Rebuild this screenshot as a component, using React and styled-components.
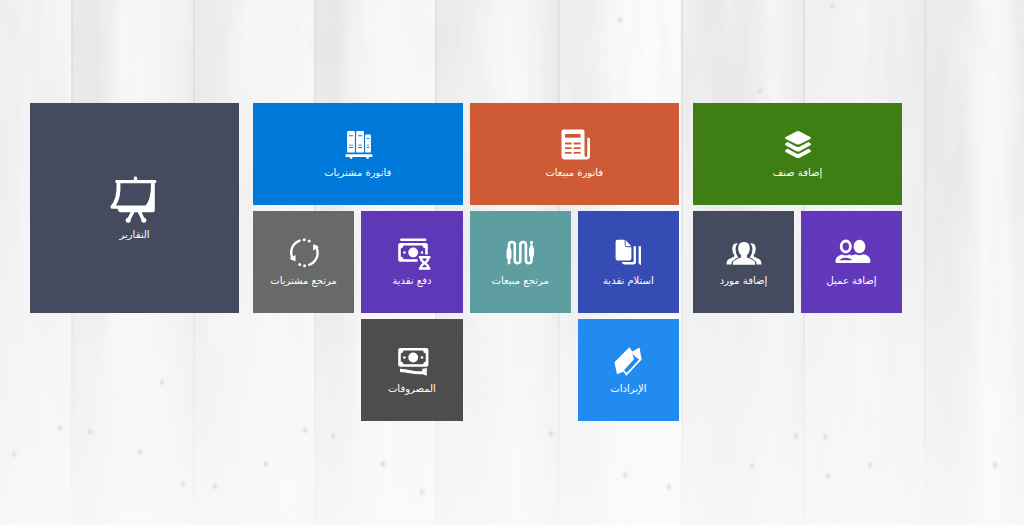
import React from "react";
import styled, { createGlobalStyle } from "styled-components";

const GlobalStyle = createGlobalStyle`
  *, *::before, *::after { box-sizing: border-box; }
  body { margin: 0; background: #f3f3f3; }
`;

const Page = styled.main`
  position: relative;
  z-index: 0;
  min-height: 100vh;
  overflow: hidden;
  padding: 103px 122px 64px 30px;
  font-family: "DejaVu Sans", sans-serif;
`;

const WoodLayer = styled.svg`
  position: absolute;
  inset: 0;
  z-index: -1;
  width: 100%;
  height: 100%;
`;

const Board = styled.div`
  display: grid;
  grid-template-columns: minmax(0, 209fr) minmax(0, 426fr) minmax(0, 209fr);
  column-gap: 14px;
  align-items: start;
`;

const Group = styled.section`
  display: grid;
  grid-template-columns: repeat(${(p) => p.$columns}, minmax(0, 1fr));
  grid-auto-rows: 102px;
  gap: 6px 7px;
`;

const TileButton = styled.button`
  grid-column: ${(p) => (p.$column ? `${p.$column} / ` : "")}span ${(p) => p.$wide};
  grid-row: span ${(p) => p.$tall};
  display: flex;
  flex-direction: column;
  align-items: center;
  justify-content: center;
  gap: 4px;
  padding: 2px 0 0;
  border: 0;
  background: ${(p) => p.$color};
  color: #fff;
  font-family: inherit;
  cursor: pointer;
`;

const Glyph = styled.svg`
  width: ${(p) => p.$size}px;
  height: ${(p) => p.$size}px;
  overflow: visible;
  fill: #fff;
`;

const Label = styled.span`
  font-size: 10px;
  line-height: 16px;
  white-space: nowrap;
`;

function Tile({ label, color, icon, wide = 1, tall = 1, column }) {
  const size = tall > 1 ? 48 : 32;
  return (
    <TileButton type="button" $color={color} $wide={wide} $tall={tall} $column={column}>
      <Glyph $size={size} viewBox={`0 0 ${size} ${size}`} aria-hidden="true">
        {icon}
      </Glyph>
      <Label>{label}</Label>
    </TileButton>
  );
}

const line = { fill: "none", stroke: "#fff", strokeLinecap: "round", strokeLinejoin: "round" };

const layersIcon = (
  <>
    <path d="M14.4 2.5Q16 1.6 17.6 2.5L28.2 8Q30 9 28.2 10L17.6 15.2Q16 16 14.4 15.2L3.8 10Q2 9 3.8 8Z" />
    <path d="M5.6 13.1L14 17.6Q16 18.6 18 17.6L26.4 13.1L28.4 14.3Q29.8 15.3 28.4 16.3L17.6 22.2Q16 23 14.4 22.2L3.6 16.3Q2.2 15.3 3.6 14.3Z" />
    <path d="M5.6 19.7L14 24.2Q16 25.2 18 24.2L26.4 19.7L28.4 20.9Q29.8 21.9 28.4 22.9L17.6 28.8Q16 29.7 14.4 28.8L3.6 22.9Q2.2 21.9 3.6 20.9Z" />
  </>
);

const invoiceIcon = (
  <path
    fillRule="evenodd"
    d="M5.5 .5H24.5Q26.5 .5 26.5 2.5V26Q26.5 28 28 28T29.3 26V8.7H30.6Q32 8.7 32 10V27Q32 30.5 28.2 30.5H7Q3.5 30.5 3.5 27V2.5Q3.5 .5 5.5 .5ZM7 5V8.8H22.6V5ZM7 13.5V15.4H13.6V13.5ZM15.6 13.5V15.4H22.6V13.5ZM7 18.2V20.1H13.6V18.2ZM15.6 18.2V20.1H22.6V18.2ZM7 22.9V24.8H13.6V22.9ZM15.6 22.9V24.8H22.6V22.9Z"
  />
);

const booksIcon = (
  <>
    <path
      fillRule="evenodd"
      d="M6.3 2H11.7Q12.9 2 12.9 3.2V22.4Q12.9 23.6 11.7 23.6H6.3Q5.1 23.6 5.1 22.4V3.2Q5.1 2 6.3 2ZM7 6.3V7.3H11V6.3ZM7 15.7V16.4H11V15.7ZM7 18V19H11V18Z"
    />
    <path
      fillRule="evenodd"
      d="M15.3 2H20.8Q22 2 22 3.2V22.4Q22 23.6 20.8 23.6H15.3Q14.1 23.6 14.1 22.4V3.2Q14.1 2 15.3 2ZM16 6.3V7.3H20.1V6.3ZM16 15.7V16.4H20.1V15.7ZM16 18V19H20.1V18Z"
    />
    <path
      fillRule="evenodd"
      d="M24.3 5.5H27.7Q28.9 5.5 28.9 6.7V22.4Q28.9 23.6 27.7 23.6H24.3Q23.1 23.6 23.1 22.4V6.7Q23.1 5.5 24.3 5.5ZM24.8 9V9.9H27.2V9ZM24.8 15.7V16.4H27.2V15.7ZM24.8 18V19H27.2V18Z"
    />
    <path d="M3.6 25.3H30.4V27.9H27.2Q26.9 30 25.7 30T24.2 27.9H10.6Q10.3 30 9.1 30T7.6 27.9H3.6Z" />
  </>
);

const customersIcon = (
  <>
    <ellipse cx="23.5" cy="9.5" rx="5.9" ry="6.8" />
    <path d="M13.8 26C16.8 25.8 18.6 24.7 18.3 22.8C18 21.2 16.4 20.1 14.6 19.3Q17.8 17.2 20 17.2Q23.5 19.4 27 17.2C31.2 17.6 34.2 20.3 34.4 23.2Q34.6 26 32.8 26Z" />
    <ellipse cx="9.8" cy="9.5" rx="4.6" ry="5.5" {...line} strokeWidth="2.8" />
    <path d="M6.2 17.6Q9.8 19.6 13.4 17.6C16.6 18.6 19.4 20.4 19.4 23.2Q19.2 26 17 26H1.2Q-.8 26-.5 23.2Q.6 18.6 6.2 17.6Z" />
    <path d="M2.8 23.2Q6.4 20.6 10.4 20.8T16.4 23.2Z" fill="#6239bb" />
  </>
);

const suppliersIcon = (
  <>
    <path d="M9.7 6.2Q4 6 4.3 12.3Q4.5 16.2 6.3 17.8V19.4L.6 22.2Q-1.4 23.4-1.5 27.5H3.2Q3.6 22.8 10.4 20.5Q7.4 16.7 7.6 12Q7.7 8.3 9.7 6.2Z" />
    <path d="M22.3 6.2Q28 6 27.7 12.3Q27.5 16.2 25.7 17.8V19.4L31.4 22.2Q33.4 23.4 33.5 27.5H28.8Q28.4 22.8 21.6 20.5Q24.6 16.7 24.4 12Q24.3 8.3 22.3 6.2Z" />
    <path d="M16 5Q21.8 5 21.8 11.2Q21.8 15.8 18.9 18.3V20.3L25.4 23.2Q27.3 24.3 27.4 27.8H4.6Q4.7 24.3 6.6 23.2L13.1 20.3V18.3Q10.2 15.8 10.2 11.2Q10.2 5 16 5Z" />
  </>
);

const documentsIcon = (
  <>
    <path d="M5.4 2.8H12.7V8.2Q12.7 10.3 14.8 10.3H19.4V21.5Q19.4 23.6 17.3 23.6H5.6Q3.6 23.6 3.6 21.5V4.7Q3.6 2.8 5.4 2.8Z" />
    <path d="M13.6 3L19.2 9.2H13.6Z" />
    <path d="M9.8 25H20.5Q21.6 25 21.6 23.9V9.2H24V25Q24 27.5 21.5 27.5H12Q10.4 27.2 9.8 25Z" />
    <path d="M26.6 9.2H29V28Q27.4 28 26.6 26Z" />
  </>
);

const cableIcon = (
  <>
    <path
      {...line}
      strokeWidth="2.6"
      d="M5 23V8Q5 5 7.9 5T10.8 8V23.3Q10.8 26.2 13.6 26.2T16.3 23.3V8Q16.3 5 19.1 5T21.9 8V23.3Q21.9 26.2 24.7 26.2T27.5 23.3V9"
    />
    <path d="M3.7 10.5H6.3L7.5 14V20.2L6.6 22.2H3.5L2.5 20.2V14ZM3.7 24H6.3V27.2H3.7Z" />
    <path d="M26.2 9H28.8L30 11.5V17.8L28.8 21H26.2L25 17.8V11.5ZM26.2 4H28.8V7.5H26.2Z" />
  </>
);

const banknote = (y, right) => (
  <>
    <path
      fillRule="evenodd"
      d={`M4.2 ${y}H${right - 2}Q${right} ${y} ${right} ${y + 2}V${y + 16.8}Q${right} ${y + 18.8} ${right - 2} ${y + 18.8}H4.2Q2.2 ${y + 18.8} 2.2 ${y + 16.8}V${y + 2}Q2.2 ${y} 4.2 ${y}ZM7.6 ${y + 2.6}Q7.3 ${y + 5} 4.8 ${y + 5.4}V${y + 13.4}Q7.3 ${y + 13.8} 7.6 ${y + 16.2}H${right - 5.4}Q${right - 5.1} ${y + 13.8} ${right - 2.6} ${y + 13.4}V${y + 5.4}Q${right - 5.1} ${y + 5} ${right - 5.4} ${y + 2.6}Z`}
    />
    <circle cx="17.2" cy={y + 9.5} r="4.9" />
    <circle cx="8.4" cy={y + 9.5} r="1.3" />
    <circle cx="26" cy={y + 9.5} r="1.3" />
  </>
);

const cashTimerIcon = (
  <>
    <path d="M5.4 1.5H29.1Q30.4 1.5 30.4 2.7T29.1 3.9H5.4Q4.1 3.9 4.1 2.7T5.4 1.5Z" />
    {banknote(6, 31.8)}
    <path d="M21.6 17.5H36V34H21.6Z" fill="#5e38b6" />
    <path
      fillRule="evenodd"
      d="M22.9 18.9H34.4V21.6H33.4Q33.4 24.3 30.6 26Q33.4 27.7 33.4 30.2H34.4V32.8H22.9V30.2H23.8Q23.8 27.7 26.6 26Q23.8 24.3 23.8 21.6H22.9ZM26.2 21.6Q26.4 23 28.6 24.5Q30.8 23 31 21.6ZM28.6 27.6Q26.4 28.8 26.2 30.2H31Q30.8 28.8 28.6 27.6Z"
    />
  </>
);

const expensesIcon = (
  <>
    {banknote(3, 32.4)}
    <path d="M4 23.8Q10 24.1 14.2 25.2Q20.5 26.7 26.5 26.1L25.8 23.9Q28.9 23.7 30.8 22.8V30.8L26.6 29.2Q20.5 29.8 14 28.2Q9 27 4 26.9Z" />
  </>
);

const cycleIcon = (
  <>
    <path {...line} strokeWidth="2.4" d="M11.6 3.6C4 6.5 1.2 14.5 4.8 22" />
    <path {...line} strokeWidth="2.4" d="M21.2 27.8C28.8 24.9 31.6 16.9 28 9.4" />
    <path d="M1.6 21.4L7.6 18L7.4 24.4Z" />
    <path d="M31 10L25 13.4L25.2 7Z" />
    <circle cx="16.2" cy="2.8" r="1.5" />
    <circle cx="21.2" cy="4" r="1.5" />
    <circle cx="16.6" cy="28.7" r="1.5" />
    <circle cx="11.7" cy="27.6" r="1.5" />
  </>
);

const walletIcon = (
  <path
    fillRule="evenodd"
    d="M2.4 17.3L17.4 2.3Q18.8 4.2 20.2 6.6L27.5 2.6L29.7 14.5L14.4 30.7L11.5 26.8L5 29.3ZM20.1 8.2Q21.2 10.4 22 14.2L12 25.2L14.6 27.9L27.2 14.4Q23.8 12.8 20.1 8.2Z"
  />
);

const presentationIcon = (
  <>
    <path
      fillRule="evenodd"
      d="M22.8 5V3Q22.8 1.6 24.5 1.6T26.2 3V5H44.4Q45.3 5 45.3 6.5T44.4 8H43.8V35Q43.8 37.2 41.8 37.2H9.5Q7.3 37.2 6.6 33.8H.4Q-1.1 32.8-.3 31.1Q6.3 24 5.5 8Q4.3 8 4.3 6.5T5.3 5ZM9.4 8.2Q10.2 22.7 5 30.4H34.6Q40.2 24.5 40 8.2Z"
    />
    <path {...line} strokeWidth="3.4" d="M21.7 37L17.6 44.8M28.5 37L32.4 44.8" />
    <circle cx="17.2" cy="45.2" r="2.5" />
    <circle cx="32.8" cy="45.2" r="2.5" />
  </>
);

/* Each plank: left edge, width, then the tones that run across it. */
const planks = [
  [0, 72, ["#eeeeee", "#f2f2f2", "#f2f2f4", "#f5f5f6"]],
  [72, 122, ["#e8e8e8", "#e9e9e9", "#f5f5f6", "#f7f7f9", "#f3f3f4", "#ebebeb"]],
  [194, 121, ["#eaeaea", "#f0f0f0", "#f4f4f4", "#f7f7f7", "#f5f5f5"]],
  [315, 121, ["#e8e8e8", "#e9e9e9", "#f5f5f5", "#f8f8f8", "#f7f7f8", "#f9f9f9"]],
  [436, 123, ["#ebebeb", "#ececec", "#f0f0f0", "#f7f7f7", "#f4f4f4", "#eaeaea"]],
  [559, 123, ["#efefef", "#eeeeee", "#f9f9f9", "#fbfbfb", "#fafafa"]],
  [682, 122, ["#eeeeee", "#eaeaea", "#eaeaea", "#f4f4f4", "#ececec"]],
  [804, 121, ["#f0f0f0", "#f2f2f2", "#f4f4f5", "#efefef", "#eeeeee"]],
  [925, 99, ["#eaeae9", "#e9e9e9", "#ebebeb", "#f8f8f9", "#f7f7f8", "#ececec"]],
];

const knots = [
  [14, 454], [60, 428], [90, 432], [162, 382], [140, 452], [183, 484], [215, 486],
  [305, 430], [266, 464], [333, 436], [383, 464], [422, 492], [551, 434], [625, 475],
  [669, 487], [752, 466], [796, 436], [825, 437], [828, 476], [870, 465], [995, 465],
  [832, 6], [620, 20], [760, 91],
];

function WoodBackground() {
  return (
    <WoodLayer viewBox="0 0 1024 525" preserveAspectRatio="none" aria-hidden="true">
      <defs>
        {planks.map(([x, , tones]) => (
          <linearGradient key={x} id={`plank-${x}`}>
            {tones.map((tone, i) => (
              <stop key={i} offset={i / (tones.length - 1)} stopColor={tone} />
            ))}
          </linearGradient>
        ))}
        <linearGradient id="fade" x1="0" y1="0" x2="0" y2="1">
          <stop offset="0.35" stopColor="#fafafa" stopOpacity="0" />
          <stop offset="1" stopColor="#fafafa" stopOpacity="0.8" />
        </linearGradient>
        <radialGradient id="knot">
          <stop offset="0" stopColor="#d2d2d2" stopOpacity="0.8" />
          <stop offset="1" stopColor="#e4e4e4" stopOpacity="0" />
        </radialGradient>
        <filter id="grain" x="0" y="0" width="100%" height="100%">
          <feTurbulence type="fractalNoise" baseFrequency="0.09 0.008" numOctaves="4" seed="8" />
          <feColorMatrix values="0 0 0 0 0.5  0 0 0 0 0.5  0 0 0 0 0.5  0.5 0 0 0 -0.18" />
        </filter>
        <filter id="sheen" x="0" y="0" width="100%" height="100%">
          <feTurbulence type="fractalNoise" baseFrequency="0.025 0.007" numOctaves="3" seed="21" />
          <feColorMatrix values="0 0 0 0 1  0 0 0 0 1  0 0 0 0 1  2 0 0 0 -0.8" />
        </filter>
      </defs>
      {planks.map(([x, width]) => (
        <rect key={x} x={x} width={width} height="525" fill={`url(#plank-${x})`} />
      ))}
      <rect width="1024" height="525" filter="url(#grain)" opacity="0.25" />
      <rect width="1024" height="525" filter="url(#sheen)" opacity="0.35" />
      {planks.slice(1).map(([x]) => (
        <rect key={x} x={x - 1} width="2" height="525" fill="#dedede" opacity="0.8" />
      ))}
      <rect width="1024" height="525" fill="url(#fade)" />
      {knots.map(([x, y]) => (
        <ellipse key={`${x}-${y}`} cx={x} cy={y} rx="4" ry="5" fill="url(#knot)" />
      ))}
    </WoodLayer>
  );
}

export default function App() {
  return (
    <>
      <GlobalStyle />
      <Page dir="rtl" lang="ar">
        <WoodBackground />
        <Board dir="ltr">
          <Group dir="rtl" $columns={2}>
            <Tile label="التقارير" color="#444b5f" icon={presentationIcon} wide={2} tall={2} />
          </Group>
          <Group dir="rtl" $columns={4}>
            <Tile label="فاتورة مبيعات" color="#cf5b36" icon={invoiceIcon} wide={2} />
            <Tile label="فاتورة مشتريات" color="#0079da" icon={booksIcon} wide={2} />
            <Tile label="استلام نقدية" color="#364cb5" icon={documentsIcon} />
            <Tile label="مرتجع مبيعات" color="#5f9ea0" icon={cableIcon} />
            <Tile label="دفع نقدية" color="#5e38b6" icon={cashTimerIcon} />
            <Tile label="مرتجع مشتريات" color="#696969" icon={cycleIcon} />
            <Tile label="الإيرادات" color="#228bf0" icon={walletIcon} column={1} />
            <Tile label="المصروفات" color="#4d4d4d" icon={expensesIcon} column={3} />
          </Group>
          <Group dir="rtl" $columns={2}>
            <Tile label="إضافة صنف" color="#3f7e12" icon={layersIcon} wide={2} />
            <Tile label="إضافة عميل" color="#6239bb" icon={customersIcon} />
            <Tile label="إضافة مورد" color="#444b5f" icon={suppliersIcon} />
          </Group>
        </Board>
      </Page>
    </>
  );
}
